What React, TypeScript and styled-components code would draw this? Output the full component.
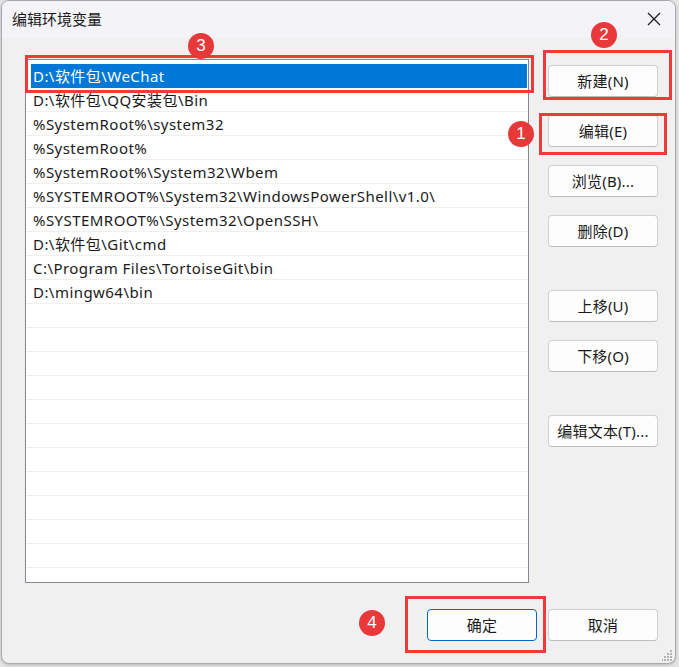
import styled, { createGlobalStyle } from 'styled-components';

const GlobalStyle = createGlobalStyle`
  html, body {
    margin: 0;
    padding: 0;
    background: #e4e4e4;
  }
  body {
    font-family: "Noto Sans", "Noto Sans CJK SC", sans-serif;
    color: #1a1a1a;
  }
`;

const Page = styled.div`
  position: relative;
  width: 679px;
  height: 667px;
  overflow: hidden;
`;

const Window = styled.div`
  position: relative;
  margin-left: 1px;
  width: 675px;
  height: 664px;
  box-sizing: border-box;
  border: 1px solid #a9a9a9;
  border-radius: 8px;
  background: #f0f0f0;
  overflow: hidden;
  display: flex;
  flex-direction: column;
  box-shadow: 0 1px 3px rgba(0, 0, 0, 0.2);
`;

const TitleBar = styled.div`
  height: 37px;
  flex: none;
  display: flex;
  align-items: center;
  justify-content: space-between;
  padding: 0 14px 0 10px;
  background: #f3f3f8;
`;

const Title = styled.span`
  font-size: 15px;
  font-family: "Noto Sans CJK SC", sans-serif;
  color: #1a1a1a;
  margin-top: -2px;
`;

const CloseIcon = styled.svg`
  width: 14px;
  height: 14px;
  margin-top: -2px;
`;

const Body = styled.div`
  flex: 1;
  display: flex;
  flex-direction: column;
  padding: 21px 17px 0 23px;
`;

const Main = styled.div`
  display: flex;
  gap: 19px;
`;

const List = styled.div`
  width: 504px;
  height: 524px;
  box-sizing: border-box;
  border: 1px solid #828790;
  background: #fff;
  padding-top: 4px;
  overflow: hidden;
`;

const Row = styled.div<{ $selected?: boolean }>`
  height: 24px;
  box-sizing: border-box;
  padding-top: 1px;
  line-height: 22px;
  font-size: 15px;
  letter-spacing: 0.45px;
  white-space: nowrap;
  padding-left: ${(p) => (p.$selected ? '2px' : '7px')};
  margin: ${(p) => (p.$selected ? '0 1px 0 5px' : '0')};
  background: ${(p) => (p.$selected ? '#0078d7' : '#fff')};
  color: ${(p) => (p.$selected ? '#fff' : '#1a1a1a')};
  border-bottom: 1px solid ${(p) => (p.$selected ? '#0078d7' : '#efefef')};
`;

const ButtonColumn = styled.div`
  display: flex;
  flex-direction: column;
  padding-top: 6px;
`;

const Button = styled.button<{ $gap?: number; $primary?: boolean }>`
  width: 110px;
  height: 32px;
  margin-top: ${(p) => p.$gap ?? 0}px;
  box-sizing: border-box;
  border: 1px solid ${(p) => (p.$primary ? '#0067c0' : '#d0d0d0')};
  border-bottom-color: ${(p) => (p.$primary ? '#0067c0' : '#bdbdbd')};
  border-radius: 4px;
  background: #fdfdfd;
  color: #1a1a1a;
  font-family: "Noto Sans", "Noto Sans CJK SC", sans-serif;
  font-size: 15px;
  letter-spacing: 0.2px;
  padding: 0;
  line-height: 30px;
`;

const Footer = styled.div`
  display: flex;
  justify-content: flex-end;
  gap: 11px;
  margin-top: 26px;
`;

const Grip = styled.svg`
  position: absolute;
  right: 2px;
  bottom: 2px;
  width: 11px;
  height: 11px;
`;

const Mark = styled.div<{ $l: number; $t: number; $w: number; $h: number }>`
  position: absolute;
  left: ${(p) => p.$l}px;
  top: ${(p) => p.$t}px;
  width: ${(p) => p.$w}px;
  height: ${(p) => p.$h}px;
  box-sizing: border-box;
  border: 3px solid #ee3a3a;
  pointer-events: none;
`;

const Badge = styled.div<{ $x: number; $y: number }>`
  position: absolute;
  left: ${(p) => p.$x - 13}px;
  top: ${(p) => p.$y - 13}px;
  width: 26px;
  height: 26px;
  border-radius: 50%;
  background: #e8383a;
  color: #fff;
  font-family: "Liberation Sans", Arial, sans-serif;
  font-size: 17px;
  line-height: 26px;
  text-align: center;
`;

const entries = [
  'D:\\软件包\\QQ安装包\\Bin',
  '%SystemRoot%\\system32',
  '%SystemRoot%',
  '%SystemRoot%\\System32\\Wbem',
  '%SYSTEMROOT%\\System32\\WindowsPowerShell\\v1.0\\',
  '%SYSTEMROOT%\\System32\\OpenSSH\\',
  'D:\\软件包\\Git\\cmd',
  'C:\\Program Files\\TortoiseGit\\bin',
  'D:\\mingw64\\bin',
];

const App = () => {
  const blanks = Array.from({ length: 12 }, (_, i) => i);
  return (
    <Page>
      <GlobalStyle />
      <Window>
        <TitleBar>
          <Title>编辑环境变量</Title>
          <CloseIcon viewBox="0 0 14 14">
            <path d="M1 1 L13 13 M13 1 L1 13" stroke="#1a1a1a" strokeWidth="1.2" fill="none" />
          </CloseIcon>
        </TitleBar>
        <Body>
          <Main>
            <List>
              <Row $selected>D:\软件包\WeChat</Row>
              {entries.map((e) => (
                <Row key={e}>{e}</Row>
              ))}
              {blanks.map((i) => (
                <Row key={'b' + i} />
              ))}
            </List>
            <ButtonColumn>
              <Button>新建(N)</Button>
              <Button $gap={18}>编辑(E)</Button>
              <Button $gap={18}>浏览(B)...</Button>
              <Button $gap={18}>删除(D)</Button>
              <Button $gap={43}>上移(U)</Button>
              <Button $gap={18}>下移(O)</Button>
              <Button $gap={43}>编辑文本(T)...</Button>
            </ButtonColumn>
          </Main>
          <Footer>
            <Button $primary>确定</Button>
            <Button>取消</Button>
          </Footer>
        </Body>
        <Grip viewBox="0 0 11 11">
          <g fill="#b5b5b5">
            <rect x="8" y="0" width="2" height="2" />
            <rect x="5" y="3" width="2" height="2" />
            <rect x="8" y="3" width="2" height="2" />
            <rect x="2" y="6" width="2" height="2" />
            <rect x="5" y="6" width="2" height="2" />
            <rect x="8" y="6" width="2" height="2" />
            <rect x="-1" y="9" width="2" height="2" />
            <rect x="2" y="9" width="2" height="2" />
            <rect x="5" y="9" width="2" height="2" />
            <rect x="8" y="9" width="2" height="2" />
          </g>
        </Grip>
      </Window>

      <Mark $l={25} $t={55} $w={509} $h={38} />
      <Mark $l={543} $t={50} $w={129} $h={50} />
      <Mark $l={539} $t={113} $w={128} $h={42} />
      <Mark $l={405} $t={596} $w={141} $h={57} />
      <Badge $x={201} $y={46}>3</Badge>
      <Badge $x={604} $y={35}>2</Badge>
      <Badge $x={521} $y={134}>1</Badge>
      <Badge $x={372} $y={623}>4</Badge>
    </Page>
  );
};

export default App;
